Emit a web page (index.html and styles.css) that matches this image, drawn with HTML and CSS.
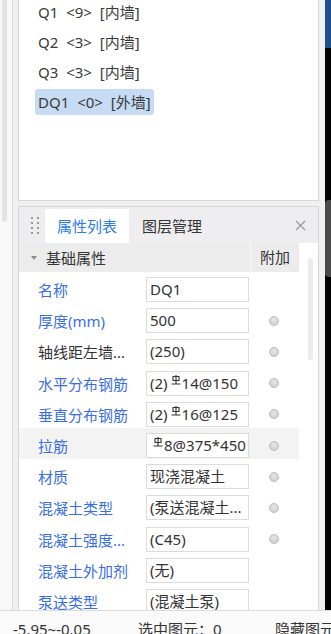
FILE: index.html
```html
<!DOCTYPE html>
<html lang="zh-CN">

<head>
  <meta charset="UTF-8" />
  <meta name="viewport" content="width=device-width, initial-scale=1.0" />
  <title>属性列表</title>
  <link rel="stylesheet" href="styles.css">
</head>

<body>
  <div class="main">
    <aside class="side-left">
      <div class="side-thumb"></div>
    </aside>
    <div class="gutter"></div>

    <div class="column">
      <section class="list-box">
        <ul class="list">
          <li><span>Q1 &lt;9&gt; [内墙]</span></li>
          <li><span>Q2 &lt;3&gt; [内墙]</span></li>
          <li><span>Q3 &lt;3&gt; [内墙]</span></li>
          <li class="selected"><span>DQ1 &lt;0&gt; [外墙]</span></li>
        </ul>
      </section>

      <section class="props">
        <div class="tabs">
          <div class="handle">
            <i></i><i></i><i></i><i></i><i></i><i></i><i></i><i></i>
          </div>
          <div class="tab active">属性列表</div>
          <div class="tab">图层管理</div>
          <svg class="close" width="11" height="11" viewBox="0 0 11 11">
            <path d="M1 1L10 10M10 1L1 10" stroke="#9a9a9a" stroke-width="1.3" fill="none" />
          </svg>
        </div>

        <div class="props-body">
          <div class="grid">
            <div class="grid-head">
              <div class="head-title">
                <svg width="6" height="4" viewBox="0 0 6 4">
                  <path d="M0 0H6L3 4Z" fill="#8c8c8c" />
                </svg>
                <span>基础属性</span>
              </div>
              <div class="head-add">附加</div>
            </div>

            <div class="row">
              <div class="label">名称</div>
              <div class="value">DQ1</div>
              <div class="addon"></div>
            </div>
            <div class="row">
              <div class="label">厚度(mm)</div>
              <div class="value">500</div>
              <div class="addon"><span class="dot"></span></div>
            </div>
            <div class="row">
              <div class="label plain">轴线距左墙...</div>
              <div class="value">(250)</div>
              <div class="addon"><span class="dot"></span></div>
            </div>
            <div class="row">
              <div class="label">水平分布钢筋</div>
              <div class="value">(2)<svg class="bar" width="10" height="10" viewBox="0 0 10 10"><path d="M2 1.5H8V5.5H2ZM5 0V9M0.5 9H9.5" stroke="#333" stroke-width="1.1" fill="none" /></svg>14@150</div>
              <div class="addon"><span class="dot"></span></div>
            </div>
            <div class="row">
              <div class="label">垂直分布钢筋</div>
              <div class="value">(2)<svg class="bar" width="10" height="10" viewBox="0 0 10 10"><path d="M2 1.5H8V5.5H2ZM5 0V9M0.5 9H9.5" stroke="#333" stroke-width="1.1" fill="none" /></svg>16@125</div>
              <div class="addon"><span class="dot"></span></div>
            </div>
            <div class="row hl">
              <div class="label">拉筋</div>
              <div class="value"><svg class="bar" width="10" height="10" viewBox="0 0 10 10"><path d="M2 1.5H8V5.5H2ZM5 0V9M0.5 9H9.5" stroke="#333" stroke-width="1.1" fill="none" /></svg>8@375*450</div>
              <div class="addon"><span class="dot"></span></div>
            </div>
            <div class="row">
              <div class="label">材质</div>
              <div class="value">现浇混凝土</div>
              <div class="addon"><span class="dot"></span></div>
            </div>
            <div class="row">
              <div class="label">混凝土类型</div>
              <div class="value">(泵送混凝土...</div>
              <div class="addon"><span class="dot"></span></div>
            </div>
            <div class="row">
              <div class="label">混凝土强度...</div>
              <div class="value">(C45)</div>
              <div class="addon"><span class="dot"></span></div>
            </div>
            <div class="row">
              <div class="label">混凝土外加剂</div>
              <div class="value">(无)</div>
              <div class="addon"></div>
            </div>
            <div class="row">
              <div class="label">泵送类型</div>
              <div class="value">(混凝土泵)</div>
              <div class="addon"></div>
            </div>
          </div>

          <div class="vscroll">
            <div class="vtrack"></div>
          </div>
        </div>
      </section>
    </div>

    <div class="side-gray"></div>
    <div class="side-dark">
      <div class="dark-top"></div>
      <div class="dark-tab"></div>
    </div>
  </div>

  <footer class="status">
    <span class="coord">-5.95~-0.05</span>
    <span class="picked">选中图元：0</span>
    <span>隐藏图元：0</span>
  </footer>
</body>

</html>
```

FILE: styles.css
```css
body {
  margin: 0;
  width: 331px;
  height: 634px;
  overflow: hidden;
  font-family: "Noto Sans", "Noto Sans CJK SC", sans-serif;
  font-size: 15px;
  color: #333;
  background-color: #f8f8f8;
}

.main {
  display: flex;
  height: 610px;
}

.side-left {
  width: 13px;
  box-sizing: border-box;
  padding-left: 2px;
  border-right: 1px solid #d9d9d9;
  background-color: #f8f8f8;
}

.side-thumb {
  width: 5px;
  height: 222px;
  background-color: #e3e3e3;
  border-radius: 0 0 3px 3px;
}

.gutter {
  width: 5px;
  background-color: #f0f0f0;
}

.column {
  width: 301px;
  display: flex;
  flex-direction: column;
  background-color: #f0f0f0;
}

.list-box {
  height: 201px;
  box-sizing: border-box;
  border: 1px solid #d6d6d6;
  border-top: 0;
  background-color: #fff;
  overflow: hidden;
}

.list {
  list-style: none;
  margin: -3px 0 0;
  padding: 0 0 0 16px;
}

.list li {
  height: 30px;
  display: flex;
  align-items: center;
  color: #3a3a3a;
  word-spacing: 4px;
}

.list li span {
  padding: 0 3px;
  line-height: 26px;
  border-radius: 3px;
}

.list li.selected span {
  background-color: #c6dcf3;
}

.props {
  flex: 1;
  margin-top: 5px;
  border: 1px solid #d6d6d6;
  border-bottom: 0;
  background-color: #fff;
  overflow: hidden;
}

.tabs {
  height: 36px;
  display: flex;
  align-items: flex-end;
  background-color: #eeeef0;
}

.handle {
  width: 26px;
  height: 36px;
  box-sizing: border-box;
  padding: 10px 0 0 12px;
  display: grid;
  grid-template-columns: repeat(2, 2px);
  grid-auto-rows: 2px;
  gap: 3px 4px;
}

.handle i {
  display: block;
  background-color: #9a9a9a;
}

.tab {
  height: 34px;
  line-height: 34px;
  padding: 0 13px;
}

.tab.active {
  width: 84px;
  box-sizing: border-box;
  padding: 0;
  text-align: center;
  background-color: #fff;
  color: #2d7ce8;
}

.close {
  margin: 0 12px 12px auto;
}

.props-body {
  display: flex;
}

.grid {
  width: 280px;
}

.grid-head {
  height: 29px;
  display: flex;
  background-color: #ececec;
}

.head-title {
  width: 231px;
  box-sizing: border-box;
  padding-left: 12px;
  display: flex;
  align-items: center;
  gap: 9px;
}

.head-add {
  flex: 1;
  border-left: 1px solid #f8f8f8;
  line-height: 29px;
  text-align: center;
}

.row {
  height: 31.2px;
  box-sizing: border-box;
  padding-top: 4px;
  display: flex;
  align-items: center;
}

.row.hl {
  background-color: #f3f3f3;
}

.label {
  width: 127px;
  box-sizing: border-box;
  padding-left: 19px;
  white-space: nowrap;
  overflow: hidden;
  color: #3a6ee8;
}

.label.plain {
  color: #333;
}

.value {
  width: 103px;
  height: 25px;
  box-sizing: border-box;
  padding-left: 3px;
  border: 1px solid #dcdcdc;
  line-height: 23px;
  white-space: nowrap;
  overflow: hidden;
  background-color: #fff;
}

.bar {
  vertical-align: 4px;
  margin: 0 1px 0 3px;
}

.addon {
  flex: 1;
  display: flex;
  justify-content: center;
}

.dot {
  width: 10px;
  height: 10px;
  box-sizing: border-box;
  border-radius: 50%;
  border: 1px solid #bdbdbd;
  background: radial-gradient(circle at 50% 35%, #e6e6e6, #c9c9c9);
}

.vscroll {
  flex: 1;
  padding-left: 9px;
}

.vtrack {
  width: 5px;
  height: 102px;
  margin-top: 15px;
  border-radius: 3px;
  background-color: #ebebeb;
}

.side-gray {
  width: 6px;
  background-color: #f0f0f0;
}

.side-dark {
  width: 6px;
  background-color: #000;
}

.dark-top {
  height: 48px;
  background-color: #1f4f86;
}

.dark-tab {
  height: 77px;
  margin-top: 152px;
  border-radius: 4px 0 0 4px;
  background-color: #4a4a4a;
}

.status {
  height: 24px;
  box-sizing: border-box;
  border-top: 1px solid #dcdcdc;
  padding: 7px 0 0 13px;
  display: flex;
  line-height: 22px;
  white-space: nowrap;
  overflow: hidden;
  background-color: #fafafa;
}

.status span {
  flex-shrink: 0;
}

.coord {
  width: 125px;
}

.picked {
  width: 137px;
}
```
